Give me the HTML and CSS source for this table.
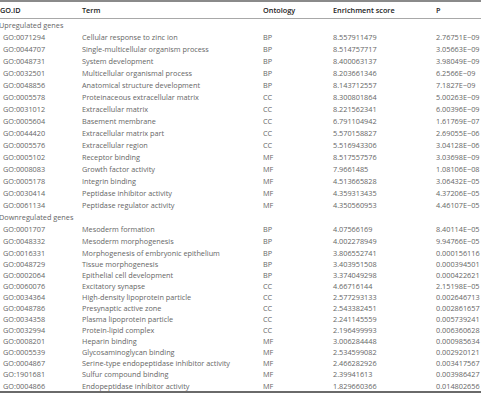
FILE: index.html
```html
<html>
    <head>
        <title>GO enrichment</title>
        <link rel="stylesheet" href="styles.css">
    </head>
    <body>
        <table class="go">
            <thead>
                <tr>
                    <th class="c_id">GO.ID</th>
                    <th class="c_term">Term</th>
                    <th class="c_ont">Ontology</th>
                    <th class="c_score">Enrichment score</th>
                    <th class="c_p">P</th>
                </tr>
            </thead>
            <tbody>
                <tr class="group"><td colspan="2">Upregulated genes</td><td></td><td></td><td></td></tr>
                <tr><td>GO:0071294</td><td>Cellular response to zinc ion</td><td>BP</td><td>8.557911479</td><td>2.76751E&minus;09</td></tr>
                <tr><td>GO:0044707</td><td>Single-multicellular organism process</td><td>BP</td><td>8.514757717</td><td>3.05663E&minus;09</td></tr>
                <tr><td>GO:0048731</td><td>System development</td><td>BP</td><td>8.400063137</td><td>3.98049E&minus;09</td></tr>
                <tr><td>GO:0032501</td><td>Multicellular organismal process</td><td>BP</td><td>8.203661346</td><td>6.2566E&minus;09</td></tr>
                <tr><td>GO:0048856</td><td>Anatomical structure development</td><td>BP</td><td>8.143712557</td><td>7.1827E&minus;09</td></tr>
                <tr><td>GO:0005578</td><td>Proteinaceous extracellular matrix</td><td>CC</td><td>8.300801864</td><td>5.00263E&minus;09</td></tr>
                <tr><td>GO:0031012</td><td>Extracellular matrix</td><td>CC</td><td>8.221562341</td><td>6.00396E&minus;09</td></tr>
                <tr><td>GO:0005604</td><td>Basement membrane</td><td>CC</td><td>6.791104942</td><td>1.61769E&minus;07</td></tr>
                <tr><td>GO:0044420</td><td>Extracellular matrix part</td><td>CC</td><td>5.570158827</td><td>2.69055E&minus;06</td></tr>
                <tr><td>GO:0005576</td><td>Extracellular region</td><td>CC</td><td>5.516943306</td><td>3.04128E&minus;06</td></tr>
                <tr><td>GO:0005102</td><td>Receptor binding</td><td>MF</td><td>8.517557576</td><td>3.03698E&minus;09</td></tr>
                <tr><td>GO:0008083</td><td>Growth factor activity</td><td>MF</td><td>7.9661485</td><td>1.08106E&minus;08</td></tr>
                <tr><td>GO:0005178</td><td>Integrin binding</td><td>MF</td><td>4.513665828</td><td>3.06432E&minus;05</td></tr>
                <tr><td>GO:0030414</td><td>Peptidase inhibitor activity</td><td>MF</td><td>4.359313435</td><td>4.37206E&minus;05</td></tr>
                <tr><td>GO:0061134</td><td>Peptidase regulator activity</td><td>MF</td><td>4.350560953</td><td>4.46107E&minus;05</td></tr>
                <tr class="group"><td colspan="2">Downregulated genes</td><td></td><td></td><td></td></tr>
                <tr><td>GO:0001707</td><td>Mesoderm formation</td><td>BP</td><td>4.07566169</td><td>8.40114E&minus;05</td></tr>
                <tr><td>GO:0048332</td><td>Mesoderm morphogenesis</td><td>BP</td><td>4.002278949</td><td>9.94766E&minus;05</td></tr>
                <tr><td>GO:0016331</td><td>Morphogenesis of embryonic epithelium</td><td>BP</td><td>3.806552741</td><td>0.000156116</td></tr>
                <tr><td>GO:0048729</td><td>Tissue morphogenesis</td><td>BP</td><td>3.403951508</td><td>0.000394501</td></tr>
                <tr><td>GO:0002064</td><td>Epithelial cell development</td><td>BP</td><td>3.374049298</td><td>0.000422621</td></tr>
                <tr><td>GO:0060076</td><td>Excitatory synapse</td><td>CC</td><td>4.66716144</td><td>2.15198E&minus;05</td></tr>
                <tr><td>GO:0034364</td><td>High-density lipoprotein particle</td><td>CC</td><td>2.577293133</td><td>0.002646713</td></tr>
                <tr><td>GO:0048786</td><td>Presynaptic active zone</td><td>CC</td><td>2.543382451</td><td>0.002861657</td></tr>
                <tr><td>GO:0034358</td><td>Plasma lipoprotein particle</td><td>CC</td><td>2.241145559</td><td>0.005739241</td></tr>
                <tr><td>GO:0032994</td><td>Protein-lipid complex</td><td>CC</td><td>2.196499993</td><td>0.006360628</td></tr>
                <tr><td>GO:0008201</td><td>Heparin binding</td><td>MF</td><td>3.006284448</td><td>0.000985634</td></tr>
                <tr><td>GO:0005539</td><td>Glycosaminoglycan binding</td><td>MF</td><td>2.534599082</td><td>0.002920121</td></tr>
                <tr><td>GO:0004867</td><td>Serine-type endopeptidase inhibitor activity</td><td>MF</td><td>2.466282926</td><td>0.003417567</td></tr>
                <tr><td>GO:1901681</td><td>Sulfur compound binding</td><td>MF</td><td>2.39941613</td><td>0.003986427</td></tr>
                <tr><td>GO:0004866</td><td>Endopeptidase inhibitor activity</td><td>MF</td><td>1.829660366</td><td>0.014802656</td></tr>
            </tbody>
        </table>
    </body>
</html>
```

FILE: styles.css
```css
* {
    font-family: 'Open Sans', 'Liberation Sans', sans-serif;
}
body {
    margin: 0;
    background: #fff;
    overflow: hidden;
}
.go {
    border-collapse: collapse;
    table-layout: fixed;
    width: 500px;
    margin-left: -1px;
    border-top: 2px solid #8a8a8a;
    border-bottom: 2px solid #6a6a6a;
    font-size: 7.3px;
    color: #666;
}
.go th {
    text-align: left;
    font-weight: 600;
    color: #222;
    height: 17px;
    padding: 0;
    border-bottom: 1px solid #a8a8a8;
    vertical-align: middle;
}
.go td {
    height: 12px;
    padding: 0;
    white-space: nowrap;
    vertical-align: middle;
}
.go tbody tr:first-child td {
    height: 13px;
    padding-top: 1px;
}
.go tbody tr:nth-child(n+20) td {
    padding-top: 1px;
    height: 11px;
}
.go tbody tr:last-child td {
    height: 13px;
    padding-top: 2px;
}
.go td:first-child {
    padding-left: 4px;
}
.go tr.group td:first-child {
    padding-left: 0;
}
.go th:first-child {
    padding-left: 1px;
}
.c_id { width: 82px; }
.c_term { width: 181px; }
.c_ont { width: 70px; }
.c_score { width: 103px; }
.c_p { width: 64px; }
```
